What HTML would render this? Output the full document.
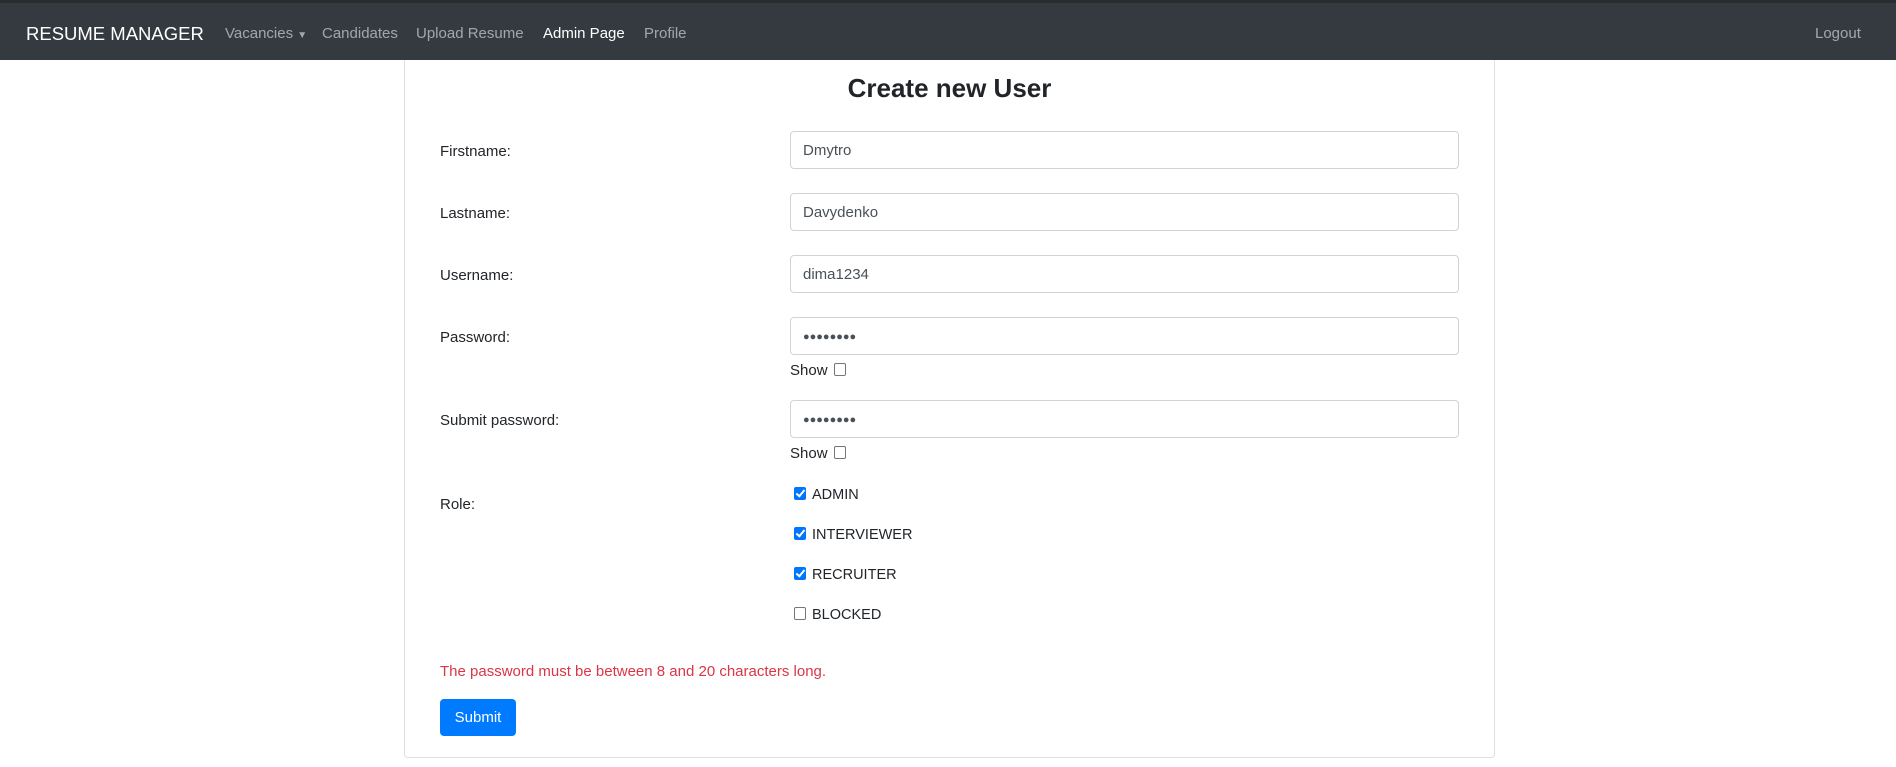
<!DOCTYPE html>
<html><head><meta charset="utf-8"><style>
*{box-sizing:border-box;margin:0;padding:0}
body{width:1896px;height:767px;background:#fff;font-family:"Liberation Sans",sans-serif;color:#212529;position:relative;overflow:hidden;font-size:15px}
.nav{position:absolute;left:0;top:0;width:1896px;height:60px;background:#343a40;border-top:3px solid #2a2d30}
.nav span{position:absolute;top:21px;font-size:15px;color:rgba(255,255,255,.55);line-height:20px}
.brand{font-size:18.5px!important;color:#fff!important;top:19px!important;line-height:24px!important}
.card{position:absolute;left:404px;top:60px;width:1091px;height:698px;border:1px solid #dfdfdf;border-top:none;border-radius:0 0 4px 4px}
.a{position:absolute}
.lbl{position:absolute;left:440px;font-size:15px;line-height:18px}
.inp{position:absolute;left:790px;width:669px;height:38px;border:1px solid #ced4da;border-radius:4px;padding:0 12px;line-height:38px;font-size:15px;color:#495057}
.show{position:absolute;left:790px;font-size:15px;line-height:18px}
.cb{display:inline-block;width:12px;height:13px;border:1px solid #767676;border-radius:2px;vertical-align:-1px;margin-left:6px;background:#fff}
.ck{position:absolute;left:794px;font-size:14.5px;line-height:18px}
.ck i{display:inline-block;width:12px;height:13px;border-radius:2px;background:#0075ff;vertical-align:-1px;margin-right:6px;position:relative}
.ck i:after{content:"";position:absolute;left:4px;top:1px;width:3px;height:7px;border:solid #fff;border-width:0 2px 2px 0;transform:rotate(40deg)}
.ck i.u{background:#fff;border:1px solid #767676}
.ck i.u:after{display:none}
</style></head><body>
<div class="nav">
<span class="brand" style="left:26px">RESUME MANAGER</span>
<span style="left:225px">Vacancies <span style="position:static;font-size:10px">▼</span></span>
<span style="left:322px">Candidates</span>
<span style="left:416px">Upload Resume</span>
<span style="left:543px;color:#fff">Admin Page</span>
<span style="left:644px">Profile</span>
<span style="left:1815px">Logout</span>
</div>
<div class="card"></div>
<div class="a" style="left:404px;width:1091px;top:71px;text-align:center;font-size:26px;font-weight:bold;line-height:34px">Create new User</div>

<div class="lbl" style="top:143px">Firstname:</div><div class="inp" style="top:131px">Dmytro</div>
<div class="lbl" style="top:205px">Lastname:</div><div class="inp" style="top:193px">Davydenko</div>
<div class="lbl" style="top:267px">Username:</div><div class="inp" style="top:255px">dima1234</div>
<div class="lbl" style="top:329px">Password:</div><div class="inp" style="top:317px;font-size:11px">●●●●●●●●</div>
<div class="show" style="top:362px">Show<span class="cb"></span></div>
<div class="lbl" style="top:412px">Submit password:</div><div class="inp" style="top:400px;font-size:11px">●●●●●●●●</div>
<div class="show" style="top:445px">Show<span class="cb"></span></div>
<div class="lbl" style="top:496px">Role:</div>
<div class="ck" style="top:486px"><i></i>ADMIN</div>
<div class="ck" style="top:526px"><i></i>INTERVIEWER</div>
<div class="ck" style="top:566px"><i></i>RECRUITER</div>
<div class="ck" style="top:606px"><i class="u"></i>BLOCKED</div>
<div class="lbl" style="top:663px;color:#dc3545">The password must be between 8 and 20 characters long.</div>
<div class="a" style="left:440px;top:699px;width:76px;height:37px;background:#007bff;border-radius:4px;color:#fff;font-size:15px;line-height:37px;text-align:center">Submit</div>
</body></html>
